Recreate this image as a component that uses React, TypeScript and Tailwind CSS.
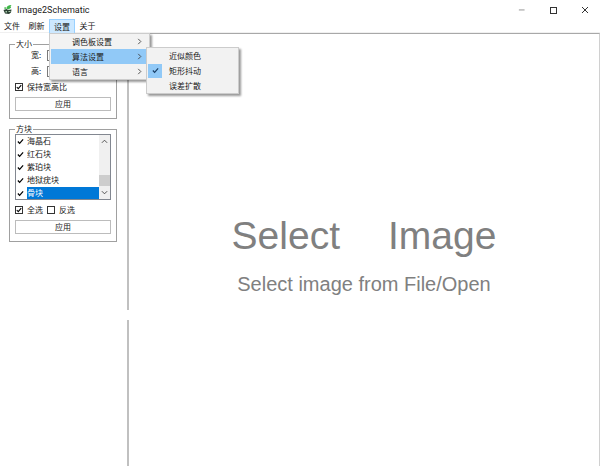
import React from 'react';

const blocks = ['海晶石', '红石块', '紫珀块', '地狱疣块', '骨块'];

const Tick: React.FC<{ className?: string }> = ({ className }) => (
  <svg viewBox="0 0 8 8" className={className} fill="none" stroke="currentColor" strokeWidth="1.4">
    <path d="M1 4 L3 6.2 L7 1.6" />
  </svg>
);

const Chevron: React.FC<{ className?: string }> = ({ className }) => (
  <svg viewBox="0 0 8 8" className={className} fill="none" stroke="currentColor" strokeWidth="1">
    <path d="M2.5 1 L5.5 4 L2.5 7" />
  </svg>
);

const Check: React.FC<{ label: string; checked?: boolean }> = ({ label, checked }) => (
  <label className="flex items-center gap-1">
    <span className="relative block w-2 h-2">
      <input
        type="checkbox"
        defaultChecked={checked}
        className="peer block appearance-none w-2 h-2 border border-[#333333] bg-white"
      />
      <Tick className="absolute inset-0 w-2 h-2 p-px text-black hidden peer-checked:block pointer-events-none" />
    </span>
    {label}
  </label>
);

const ListCheck: React.FC<{ label: string; selected: boolean }> = ({ label, selected }) => (
  <label className="flex items-center h-3 leading-3">
    <span className="relative block w-[11px] h-3 bg-white">
      <input type="checkbox" defaultChecked className="peer block appearance-none w-[11px] h-3" />
      <Tick className="absolute left-px top-[3px] w-[7px] h-[7px] text-black hidden peer-checked:block pointer-events-none" />
    </span>
    <span className={selected ? 'flex-1 bg-[#0078d7] text-white' : 'flex-1'}>{label}</span>
  </label>
);

const ApplyButton: React.FC = () => (
  <button className="block w-full h-[14px] leading-3 border border-[#bcbcbc] bg-white text-center">应用</button>
);

const SizeField: React.FC<{ id: string; label: string; value: string }> = ({ id, label, value }) => (
  <div className="flex items-center gap-[6px] h-3 pl-4">
    <label htmlFor={id}>{label}</label>
    <input id={id} defaultValue={value} className="min-w-0 flex-1 h-[11px] px-[2px] border border-[#7a7a7a] bg-white" />
  </div>
);

const MenuItem: React.FC<{ label: string; active?: boolean }> = ({ label, active }) => (
  <button
    role="menuitem"
    aria-haspopup="menu"
    className={
      active
        ? 'flex w-full items-center justify-between h-[15px] pl-[21px] pr-[5px] bg-[#91c9f7]'
        : 'flex w-full items-center justify-between h-[15px] pl-[21px] pr-[5px]'
    }
  >
    {label}
    <Chevron className="w-[7px] h-[7px] text-[#404040]" />
  </button>
);

const SubMenuItem: React.FC<{ label: string; checked?: boolean }> = ({ label, checked }) => (
  <button role="menuitemradio" aria-checked={!!checked} className="flex w-full items-center gap-[7px] h-[15px]">
    <span className={checked ? 'flex items-center justify-center w-[14px] h-[14px] bg-[#91c9f7]' : 'w-[14px]'}>
      {checked && <Tick className="w-[7px] h-[7px] text-[#1a3f66]" />}
    </span>
    {label}
  </button>
);

const App: React.FC = () => {
  return (
    <div className="flex flex-col min-h-screen bg-white text-[#202020] text-[8px] leading-[10px] font-['Noto_Sans_CJK_SC',sans-serif]">
      {/* Title bar */}
      <header className="flex items-center justify-between h-[19px] pl-[3px] pr-[11px]">
        <div className="flex items-center gap-1">
          <svg viewBox="0 0 20 20" className="w-[10px] h-[11px]">
            <path d="M7 8 Q7 1 17 1 L15 4 Q18 6 14 8 L10 10 Z" fill="#3fb649" />
            <path d="M2 6 L6 5 L7 9 L3 9 Z" fill="#6cc873" />
            <path d="M1 11 L7 9 L10 11 L17 10 L16 16 L12 19 L4 18 Z" fill="#2b4032" />
            <path d="M5 13 h3 v3 h-3 Z M11 13 h4 v2 h-4 Z" fill="#a8c9ab" />
          </svg>
          <h1 className="text-[9px] leading-3 font-['Roboto',sans-serif]">Image2Schematic</h1>
        </div>
        <div className="flex items-center gap-6 text-[#333333]">
          <button aria-label="最小化">
            <svg viewBox="0 0 8 8" className="block w-[7px] h-[7px] text-[#888888]" stroke="currentColor">
              <path d="M1 4.5 H7.5" />
            </svg>
          </button>
          <button aria-label="最大化">
            <svg viewBox="0 0 8 8" className="block w-2 h-2" fill="none" stroke="currentColor">
              <rect x="1.5" y="1.5" width="6" height="6" />
            </svg>
          </button>
          <button aria-label="关闭">
            <svg viewBox="0 0 8 8" className="block w-2 h-2" fill="none" stroke="currentColor">
              <path d="M1 1 L7 7 M7 1 L1 7" />
            </svg>
          </button>
        </div>
      </header>

      {/* Menu bar */}
      <nav className="flex h-[14px] border-b border-[#f0f0f0]">
        <button className="w-6">文件</button>
        <button className="w-[25px]">刷新</button>
        <div className="relative z-10">
          <button className="block w-[26px] h-[14px] border border-[#99d1ff] border-b-0 bg-[#cce8ff]">设置</button>
          <div
            role="menu"
            className="absolute left-0 top-[14px] w-[101px] px-px border border-[#cccccc] bg-[#f2f2f2] shadow-[2px_2px_2px_rgba(0,0,0,0.4)]"
          >
            <MenuItem label="调色板设置" />
            <MenuItem label="算法设置" active />
            <MenuItem label="语言" />
            <div
              role="menu"
              className="absolute left-24 top-[13px] w-[93px] px-px border border-[#cccccc] bg-[#f2f2f2] shadow-[2px_2px_2px_rgba(0,0,0,0.4)]"
            >
              <SubMenuItem label="近似颜色" />
              <SubMenuItem label="矩形抖动" checked />
              <SubMenuItem label="误差扩散" />
            </div>
          </div>
        </div>
        <button className="w-[25px]">关于</button>
      </nav>

      <div className="flex flex-1">
        {/* Settings panel */}
        <aside className="flex flex-col gap-[5px] w-[127px] shrink-0 pl-[9px] pr-[10px] pt-[6px]">
          <fieldset className="min-w-0 border border-[#a0a0a0] px-[5px] pb-[7px]">
            <legend className="px-px">大小</legend>
            <div className="flex flex-col gap-1">
              <SizeField id="width" label="宽:" value="64" />
              <SizeField id="height" label="高:" value="64" />
            </div>
            <div className="pt-[5px] pb-[5px]">
              <Check label="保持宽高比" checked />
            </div>
            <ApplyButton />
          </fieldset>

          <fieldset className="min-w-0 border border-[#a0a0a0] px-[5px] pb-[7px]">
            <legend className="px-px">方块</legend>
            <div className="flex border border-[#828790]">
              <div className="flex flex-1 flex-col gap-px">
                {blocks.map((name, idx) => (
                  <ListCheck key={name} label={name} selected={idx === blocks.length - 1} />
                ))}
              </div>
              <div className="flex flex-col items-center w-[11px] bg-[#f0f0f0] text-[#404040]">
                <Chevron className="w-[7px] h-[7px] my-[3px] -rotate-90" />
                <div className="flex-1" />
                <div className="w-full h-[11px] bg-[#cdcdcd]" />
                <Chevron className="w-[7px] h-[7px] my-[3px] rotate-90" />
              </div>
            </div>
            <div className="flex gap-1 pt-[5px] pb-[5px]">
              <Check label="全选" checked />
              <Check label="反选" />
            </div>
            <ApplyButton />
          </fieldset>
        </aside>

        {/* Image area */}
        <main className="relative flex flex-1 flex-col items-center justify-center gap-3 border-l-2 border-t border-r border-t-[#a8a8a8] border-l-[#c0c0c0] border-r-[#d0d0d0] pt-2 text-[#808080]">
          <span className="absolute -left-[2px] top-[276px] w-[2px] h-[10px] bg-white" />
          <div className="flex gap-12 text-[39px] leading-[48px] font-['Liberation_Sans',sans-serif]">
            <span>Select</span>
            <span>Image</span>
          </div>
          <p className="text-[20px] leading-6 font-['Liberation_Sans',sans-serif]">Select image from File/Open</p>
        </main>
      </div>
    </div>
  );
};
export default App;
